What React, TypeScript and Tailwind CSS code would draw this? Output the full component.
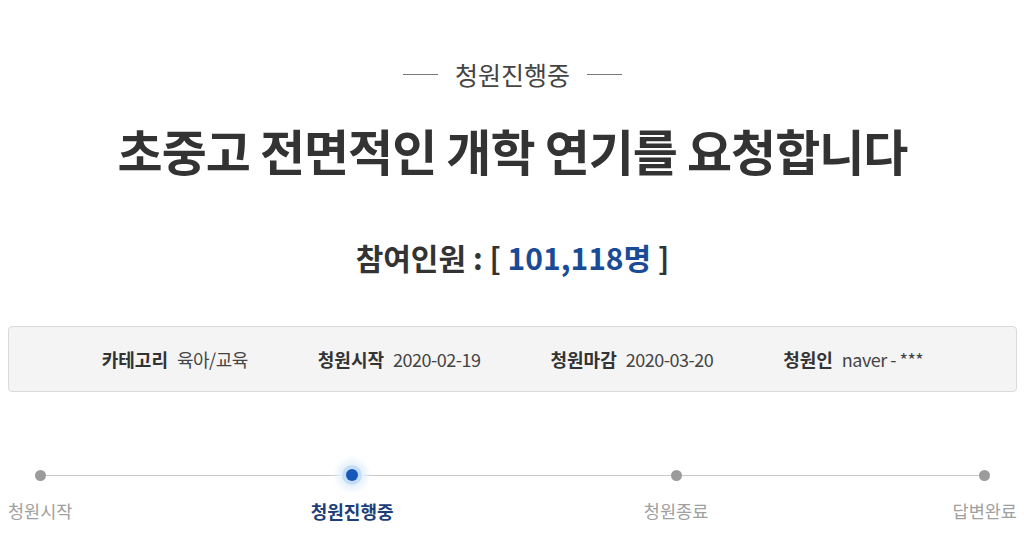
import React from 'react';

const info = [
  { label: '카테고리', value: '육아/교육' },
  { label: '청원시작', value: '2020-02-19' },
  { label: '청원마감', value: '2020-03-20' },
  { label: '청원인', value: 'naver - ***' },
];

const steps = [
  { label: '청원시작', active: false },
  { label: '청원진행중', active: true },
  { label: '청원종료', active: false },
  { label: '답변완료', active: false },
];

export default function App() {
  return (
    <div
      className="w-[1024px] h-[546px] overflow-hidden bg-white pl-[8px] pr-[7px] pt-[62px]"
      style={{ fontFamily: "'Noto Sans CJK KR', 'Noto Sans', sans-serif" }}
    >
      {/* 상태 헤더 */}
      <div className="flex items-center justify-center gap-[17px]">
        <span className="block w-[35px] h-px bg-[#777]" />
        <span className="text-[25px] leading-[25px] text-[#444]">청원진행중</span>
        <span className="block w-[35px] h-px bg-[#777]" />
      </div>

      <h1 className="mt-[38px] text-center text-[49px] leading-[49px] font-bold tracking-[-1px] text-[#333]">
        초중고 전면적인 개학 연기를 요청합니다
      </h1>

      <p className="mt-[68px] text-center text-[30px] leading-[30px] font-bold text-[#333]">
        참여인원 : [ <span className="text-[#1b4b96]">101,118명</span> ]
      </p>

      {/* 청원 정보 */}
      <div className="mt-[54px] h-[66px] flex items-center justify-center gap-[70px] rounded-[4px] border border-[#dadada] bg-[#f4f4f4]">
        {info.map(item => (
          <div key={item.label} className="flex items-center gap-[9px] text-[18px] leading-[18px]">
            <span className="font-bold text-[#333]">{item.label}</span>
            <span className="text-[#444] tracking-[-0.5px]">{item.value}</span>
          </div>
        ))}
      </div>

      {/* 진행 단계 */}
      <div className="relative mt-[71px]">
        <div className="absolute left-[32px] right-[32px] top-[12px] h-px bg-[#c9c9c9]" />
        <div className="relative flex justify-between">
          {steps.map(step => (
            <div
              key={step.label}
              className={step.active ? 'flex flex-col items-center -ml-[6px] mr-[6px]' : 'flex flex-col items-center'}
            >
              <div className="h-[24px] flex items-center justify-center">
                {step.active ? (
                  <span className="block w-[12px] h-[12px] rounded-full bg-[#1657b8] shadow-[0_0_0_4px_#c4def8,0_0_6px_9px_#e6f1fc]" />
                ) : (
                  <span className="block w-[11px] h-[11px] rounded-full bg-[#9b9b9b]" />
                )}
              </div>
              <span
                className={
                  step.active
                    ? 'mt-[15px] text-[18px] leading-[18px] font-bold text-[#1d3e78]'
                    : 'mt-[15px] text-[17.5px] leading-[18px] text-[#a0a0a0]'
                }
              >
                {step.label}
              </span>
            </div>
          ))}
        </div>
      </div>
    </div>
  );
}
